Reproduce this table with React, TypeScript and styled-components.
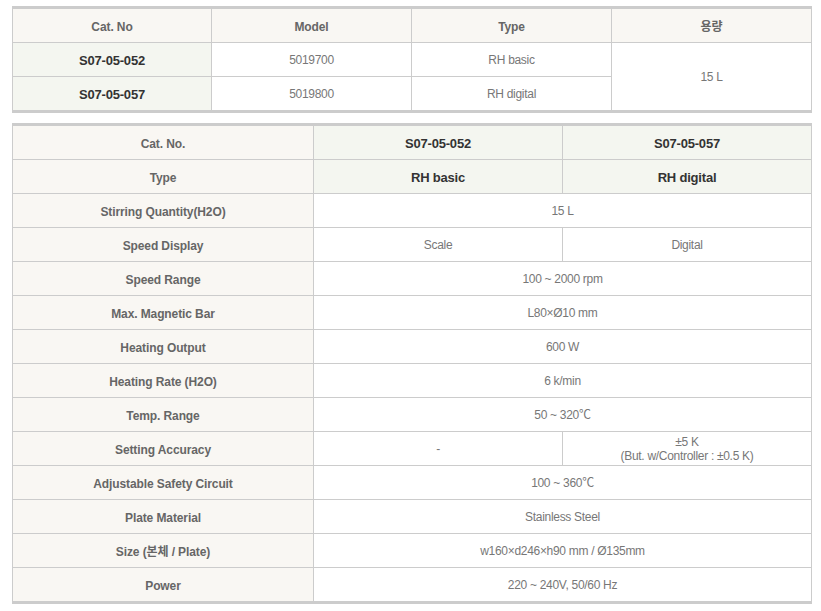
import React from "react";
import styled, { createGlobalStyle } from "styled-components";

const GlobalStyle = createGlobalStyle`
  html, body { margin: 0; padding: 0; background: #fff; }
  body { font-family: "Liberation Sans", "Noto Sans CJK KR", sans-serif; }
`;

const Page = styled.div`
  padding: 6px 0 0 12px;
  display: flex;
  flex-direction: column;
  gap: 10px;
  width: 800px;
`;

const Grid = styled.div<{ $cols: string; $rows: number }>`
  display: grid;
  grid-template-columns: ${(p) => p.$cols};
  grid-template-rows: repeat(${(p) => p.$rows - 1}, 34px) 33px;
  border-top: 3px solid #cccccc;
  border-bottom: 3px solid #cccccc;
  border-left: 1px solid #cccccc;
`;

type Kind = "head" | "key" | "val";

const Cell = styled.div<{ $kind: Kind; $span?: number; $col?: string; $last?: boolean }>`
  display: flex;
  flex-direction: column;
  align-items: center;
  justify-content: center;
  text-align: center;
  box-sizing: border-box;
  border-right: 1px solid #cccccc;
  border-bottom: ${(p) => (p.$last ? "none" : "1px solid #cccccc")};
  grid-row: ${(p) => (p.$span ? `span ${p.$span}` : "auto")};
  grid-column: ${(p) => p.$col ?? "auto"};
  font-size: ${(p) => (p.$kind === "key" ? 13 : 12)}px;
  line-height: 14px;
  padding-top: ${(p) => (p.$kind === "val" ? 0 : 2)}px;
  background: ${(p) => (p.$kind === "head" ? "#f9f7f3" : p.$kind === "key" ? "#f4f6f0" : "#ffffff")};
  color: ${(p) => (p.$kind === "head" ? "#666666" : p.$kind === "key" ? "#333333" : "#777777")};
  font-weight: ${(p) => (p.$kind === "val" ? 400 : 700)};
  letter-spacing: ${(p) => (p.$kind === "val" ? "-0.3px" : p.$kind === "key" ? "-0.2px" : "-0.1px")};
`;

const Line = styled.span`
  display: block;
`;

const specRows: { label: string; a: React.ReactNode; b?: React.ReactNode }[] = [
  { label: "Stirring Quantity(H2O)", a: "15 L" },
  { label: "Speed Display", a: "Scale", b: "Digital" },
  { label: "Speed Range", a: "100 ~ 2000 rpm" },
  { label: "Max. Magnetic Bar", a: "L80×Ø10 mm" },
  { label: "Heating Output", a: "600 W" },
  { label: "Heating Rate (H2O)", a: "6 k/min" },
  { label: "Temp. Range", a: "50 ~ 320℃" },
  {
    label: "Setting Accuracy",
    a: "-",
    b: (
      <>
        <Line>±5 K</Line>
        <Line>(But. w/Controller : ±0.5 K)</Line>
      </>
    ),
  },
  { label: "Adjustable Safety Circuit", a: "100 ~ 360℃" },
  { label: "Plate Material", a: "Stainless Steel" },
  { label: "Size (본체 / Plate)", a: "w160×d246×h90 mm / Ø135mm" },
  { label: "Power", a: "220 ~ 240V, 50/60 Hz" },
];

export default function App() {
  return (
    <>
      <GlobalStyle />
      <Page>
        <Grid $cols="199px 200px 200px 200px" $rows={3}>
          <Cell $kind="head">Cat. No</Cell>
          <Cell $kind="head">Model</Cell>
          <Cell $kind="head">Type</Cell>
          <Cell $kind="head">용량</Cell>
          <Cell $kind="key">S07-05-052</Cell>
          <Cell $kind="val">5019700</Cell>
          <Cell $kind="val">RH basic</Cell>
          <Cell $kind="val" $span={2} $last>
            15 L
          </Cell>
          <Cell $kind="key" $last>
            S07-05-057
          </Cell>
          <Cell $kind="val" $last>
            5019800
          </Cell>
          <Cell $kind="val" $last>
            RH digital
          </Cell>
        </Grid>

        <Grid $cols="301px 249px 249px" $rows={specRows.length + 2}>
          <Cell $kind="head">Cat. No.</Cell>
          <Cell $kind="key">S07-05-052</Cell>
          <Cell $kind="key">S07-05-057</Cell>
          <Cell $kind="head">Type</Cell>
          <Cell $kind="key">RH basic</Cell>
          <Cell $kind="key">RH digital</Cell>
          {specRows.map((r, i) => {
            const last = i === specRows.length - 1;
            return (
              <React.Fragment key={r.label}>
                <Cell $kind="head" $last={last}>
                  {r.label}
                </Cell>
                {r.b === undefined ? (
                  <Cell $kind="val" $col="span 2" $last={last}>
                    {r.a}
                  </Cell>
                ) : (
                  <>
                    <Cell $kind="val" $last={last}>
                      {r.a}
                    </Cell>
                    <Cell $kind="val" $last={last}>
                      {r.b}
                    </Cell>
                  </>
                )}
              </React.Fragment>
            );
          })}
        </Grid>
      </Page>
    </>
  );
}
